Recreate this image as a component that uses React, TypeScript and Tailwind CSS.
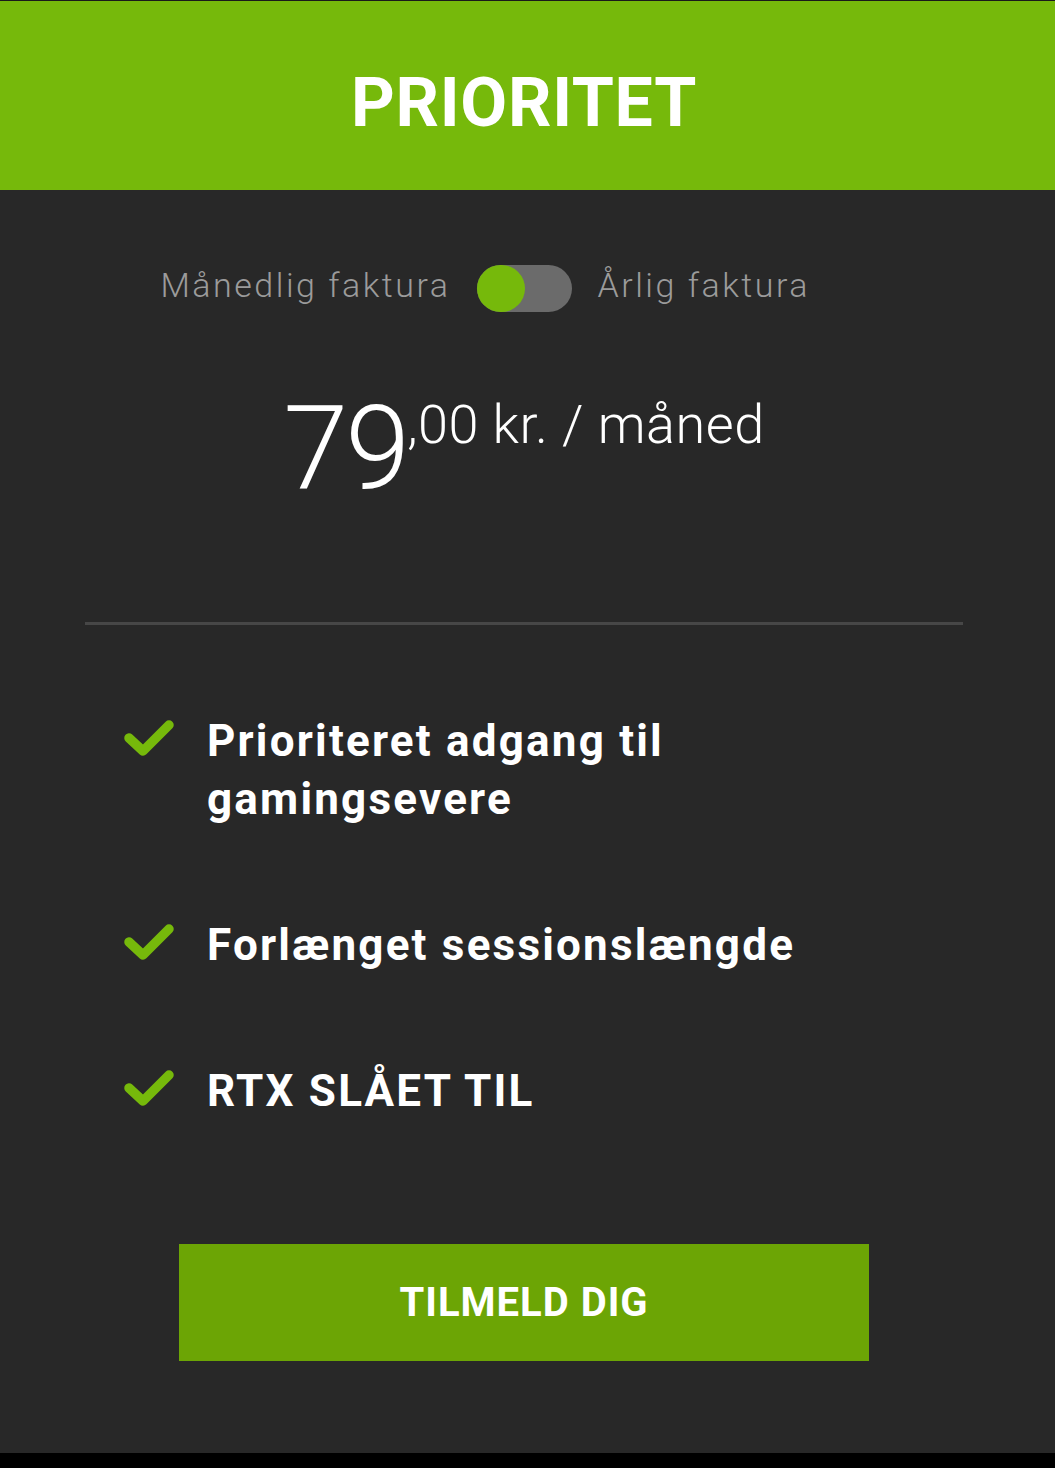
const features = ["Prioriteret adgang til gamingsevere", "Forlænget sessionslængde", "RTX SLÅET TIL"];

function CheckMark() {
  return (
    <svg width="56" height="42" viewBox="0 0 56 42" className="shrink-0">
      <polyline points="9,20 23,33 49,7" fill="none" stroke="#76b90b" strokeWidth="9.5" strokeLinecap="round" strokeLinejoin="round" />
    </svg>
  );
}

export default function App() {
  return (
    <div className="min-h-[1468px] w-full bg-black" style={{ fontFamily: 'Roboto, "Liberation Sans", sans-serif' }}>
      <div className="border-t border-[#1a1a1a] bg-[#76b90b]">
        <div className="flex h-[189px] items-center justify-center pr-[7px] pt-[14px]">
          <h1 className="text-[68px] font-bold leading-none tracking-[0.7px] text-white">PRIORITET</h1>
        </div>
      </div>

      <div className="flex h-[1263px] flex-col items-center bg-[#282828] pr-[7px]">
        <div className="mt-[75px] grid w-full grid-cols-[1fr_auto_1fr] items-center gap-[26px] text-[34px] font-light leading-none tracking-[2.5px] text-[#9b9b9b]">
          <span className="pb-[8px] text-right">Månedlig faktura</span>
          <div className="relative h-[47px] w-[95px] rounded-full bg-[#6b6b6b]">
            <div className="absolute left-0 top-0 h-[47px] w-[48px] rounded-full bg-[#76b90b]" />
          </div>
          <span className="pb-[8px]">Årlig faktura</span>
        </div>

        <div className="mt-[78px] flex items-start text-white">
          <span className="text-[117px] font-light leading-none tracking-[-3px]">79</span>
          <span className="mt-[8px] text-[54px] font-light leading-none tracking-[0.5px]">,00 kr. / måned</span>
        </div>

        <div className="mt-[115px] h-[3px] w-[878px] bg-[#474747]" />

        <ul className="mt-[87px] flex w-full flex-col gap-[88px] pl-[120px] pr-[40px]">
          {features.map((f) => (
            <li key={f} className="flex items-start gap-[31px]">
              <div className="mt-[6px]">
                <CheckMark />
              </div>
              <span className="max-w-[620px] text-[44px] font-bold leading-[58px] tracking-[2.2px] text-white">{f}</span>
            </li>
          ))}
        </ul>

        <button className="mt-[124px] flex h-[117px] w-[690px] items-center justify-center bg-[#6ca505] text-[40px] font-bold leading-none tracking-[1px] text-white">
          TILMELD DIG
        </button>
      </div>
    </div>
  );
}
